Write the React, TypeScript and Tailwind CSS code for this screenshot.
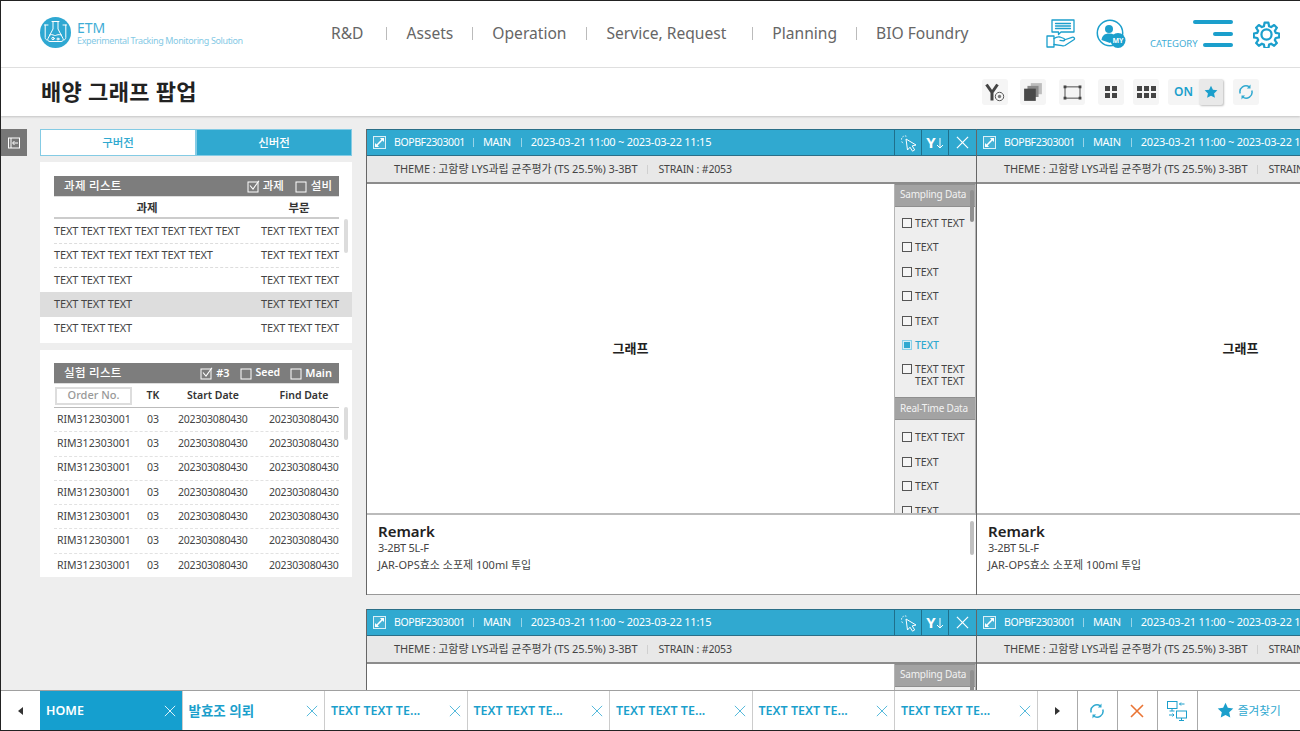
import React from "react";

const FONT = '"Noto Sans", "Noto Sans CJK KR", sans-serif';

function Logo() {
  return (
    <svg width="31" height="31" viewBox="0 0 31 31" fill="none" stroke="#fff" strokeWidth="1" strokeLinecap="round" strokeLinejoin="round">
      <circle cx="15.5" cy="15.5" r="15.5" fill="#2fa8d2" stroke="none" />
      <path d="M12 4.500h7M13 4.500v7.500l-5 9.500c-.7 1.600.2 3 2 3h11c1.800 0 2.700-1.400 2-3l-5-9.500V4.500" />
      <path d="M9.500 18c3-1.500 4.500 1 6 .5s3-1.500 6-.5" />
      <circle cx="13" cy="21.500" r="1.200" />
      <circle cx="18" cy="22" r="1" />
      <path d="M4.500 8h3.500M5.200 8v12.500c0 1.500 1 2.500 2 2.500M26.500 8H23M25.800 8v12.500c0 1.500-1 2.500-2 2.500" />
    </svg>
  );
}

function ChatHand() {
  return (
    <svg width="32" height="30" viewBox="0 0 32 30" fill="none" stroke="#1b9fcc" strokeWidth="1.300" strokeLinejoin="round" strokeLinecap="round">
      <path d="M6 1h22v12H15l-2.500 2.500V13H6z" />
      <path d="M9.500 4.500h15M9.500 7h15M9.500 9.500h15" />
      <rect x="1" y="17" width="7" height="11" />
      <path d="M8 19.500c2-1.500 4-2 6-1.500l4 1.500c1.500.6 1 2.500-.5 2.300L14 21.300M18 21l8-2.700c2-.5 3.500 1.200 1.800 2.400L19 26.500c-1 .5-2 .5-3 .2l-8-1.200" />
    </svg>
  );
}

function UserMy() {
  return (
    <svg width="31" height="30" viewBox="0 0 31 30" fill="none">
      <circle cx="14" cy="14" r="12.700" stroke="#1b9fcc" strokeWidth="1.500" />
      <circle cx="13" cy="10" r="4" fill="#1b9fcc" />
      <path d="M5.500 21c.5-4.500 3.500-6.500 7.500-6.500s6 1.500 7 4L14 24z" fill="#1b9fcc" />
      <circle cx="22" cy="21.500" r="7.500" fill="#1b9fcc" />
      <text x="22" y="24" textAnchor="middle" fontSize="7" fontWeight="700" fill="#fff" fontFamily={FONT}>MY</text>
    </svg>
  );
}

function Gear() {
  return (
    <svg width="27" height="27" viewBox="0 0 24 24" fill="none" stroke="#1b9fcc" strokeWidth="2" strokeLinejoin="round">
      <path d="M10.300 1.500h3.400l.6 3.100 1.800.8 2.700-1.800 2.400 2.400-1.800 2.700.8 1.800 3.100.6v3.400l-3.100.6-.8 1.800 1.800 2.700-2.400 2.400-2.700-1.800-1.800.8-.6 3.100h-3.400l-.6-3.100-1.800-.8-2.700 1.800-2.400-2.400 1.800-2.700-.8-1.800-3.100-.6v-3.400l3.100-.6.8-1.800-1.800-2.700 2.400-2.400 2.700 1.800 1.800-.8z" />
      <circle cx="12" cy="12" r="4.500" />
    </svg>
  );
}

function Refresh({ size = 16, color = "#30a9d0" }: { size?: number; color?: string }) {
  return (
    <svg width={size} height={size} viewBox="0 0 16 16" fill="none" stroke={color} strokeWidth="1.500">
      <path d="M2.200 9.500A6 6 0 0 1 11.500 3" />
      <path d="M13.800 6.500A6 6 0 0 1 4.500 13" />
      <path d="M12.500 .6v3.800H8.900z" fill={color} stroke="none" />
      <path d="M3.500 15.400v-3.800h3.600z" fill={color} stroke="none" />
    </svg>
  );
}

function Star({ size = 14, color = "#1b9fcc" }: { size?: number; color?: string }) {
  return (
    <svg width={size} height={size} viewBox="0 0 16 16">
      <path d="M8 .8l2.200 4.700 5.100.6-3.800 3.500 1 5.100L8 12.200l-4.500 2.500 1-5.100L.7 6.100l5.100-.6z" fill={color} />
    </svg>
  );
}

function Cross({ size = 14, color = "#fff", width = 1 }: { size?: number; color?: string; width?: number }) {
  return (
    <svg width={size} height={size} viewBox="0 0 14 14" stroke={color} strokeWidth={width} fill="none">
      <path d="M1 1l12 12M13 1L1 13" />
    </svg>
  );
}

function Box({ checked, color = "#555", className = "" }: { checked?: boolean; color?: string; className?: string }) {
  return (
    <svg width="13" height="13" viewBox="0 0 13 13" fill="none" className={className}>
      <rect x="1" y="2" width="10" height="10" stroke={color} strokeWidth="1" />
      {checked && <path d="M3 5.500l3 3.500L12 .8" stroke={color} strokeWidth="1.100" />}
    </svg>
  );
}

function ToolButton({ children }: { children: React.ReactNode }) {
  return <div className="w-[26px] h-[26px] rounded-[3px] bg-[#f5f5f5] flex items-center justify-center">{children}</div>;
}

function Header() {
  const nav: [string, string, string][] = [
    ["R&D", "", ""],
    ["Assets", "ml-[22px]", "ml-[20px]"],
    ["Operation", "ml-[19px]", "ml-[19px]"],
    ["Service, Request", "ml-[20px]", "ml-[19px]"],
    ["Planning", "ml-[26px]", "ml-[19px]"],
    ["BIO Foundry", "ml-[19px]", "ml-[19px]"],
  ];
  return (
    <header className="h-[67px] bg-white border-b border-[#e2e2e2] flex items-center shrink-0">
      <div className="ml-[39px] flex items-center w-[291px] -mt-[4px] shrink-0">
        <Logo />
        <div className="ml-[6px] flex flex-col">
          <span className="text-[14px] leading-[17px] text-[#3fadd6]">ETM</span>
          <span className="text-[9px] leading-[10px] tracking-[-0.37px] text-[#84c9e5] whitespace-nowrap">Experimental Tracking Monitoring Solution</span>
        </div>
      </div>
      <nav className="flex items-center text-[15.600px] text-[#666]">
        {nav.map(([t, sep, m], i) => (
          <React.Fragment key={t}>
            {i > 0 && <span className={`w-px h-[13px] bg-[#bbb] ${sep}`} />}
            <span className={`${m} whitespace-nowrap`}>{t}</span>
          </React.Fragment>
        ))}
      </nav>
      <div className="ml-auto flex items-center">
        <ChatHand />
        <div className="ml-[18px]"><UserMy /></div>
        <div className="ml-[23px] relative w-[83px] h-[30px]">
          <span className="absolute left-0 top-[18px] text-[9.500px] leading-[14px] text-[#3fadd6]">CATEGORY</span>
          <span className="absolute right-0 top-[1px] w-[40px] h-[4px] rounded-full bg-[#1b9fcc]" />
          <span className="absolute right-0 top-[13px] w-[20px] h-[4px] rounded-full bg-[#1b9fcc]" />
          <span className="absolute right-0 top-[24px] w-[30px] h-[4px] rounded-full bg-[#1b9fcc]" />
        </div>
        <div className="ml-[20px] mr-[20px]"><Gear /></div>
      </div>
    </header>
  );
}

function TitleBar() {
  return (
    <div className="h-[48px] bg-white flex items-center shrink-0 shadow-[0_1px_2px_rgba(0,0,0,0.18)] z-10">
      <h1 className="ml-[40px] text-[22px] font-semibold text-[#222] tracking-[0.3px] -mt-[1px]">배양 그래프 팝업</h1>
      <div className="ml-auto mr-[41px] flex items-center">
        <ToolButton>
          <svg width="22" height="22" viewBox="0 0 22 22" fill="none">
            <path d="M2.500 3.500l5.500 8v8M13.500 3.500L8 11.500" stroke="#444" strokeWidth="3" />
            <circle cx="15.500" cy="15.500" r="4.200" fill="#f5f5f5" stroke="#555" strokeWidth="1" />
            <circle cx="15.500" cy="15.500" r="1.700" fill="#777" />
          </svg>
        </ToolButton>
        <div className="ml-[12px]">
          <ToolButton>
            <svg width="20" height="20" viewBox="0 0 18 18">
              <rect x="7" y="1" width="10" height="10" fill="#bdbdbd" />
              <rect x="4" y="3.500" width="10" height="10" fill="#8a8a8a" />
              <rect x="1" y="6" width="10.500" height="11" fill="#4a4a4a" />
            </svg>
          </ToolButton>
        </div>
        <div className="ml-[13px]">
          <ToolButton>
            <svg width="19" height="15" viewBox="0 0 20 16" fill="none">
              <rect x="2" y="2" width="16" height="12" stroke="#444" strokeWidth="1" />
              <rect x="0.500" y="0.500" width="3" height="3" fill="#444" />
              <rect x="16.500" y="0.500" width="3" height="3" fill="#444" />
              <rect x="0.500" y="12.500" width="3" height="3" fill="#444" />
              <rect x="16.500" y="12.500" width="3" height="3" fill="#444" />
            </svg>
          </ToolButton>
        </div>
        <div className="ml-[13px]">
          <ToolButton>
            <div className="grid grid-cols-2 gap-[2px]">
              {[0, 1, 2, 3].map((i) => <span key={i} className="w-[5px] h-[5px] bg-[#444]" />)}
            </div>
          </ToolButton>
        </div>
        <div className="ml-[9px]">
          <ToolButton>
            <div className="grid grid-cols-3 gap-[2px]">
              {[0, 1, 2, 3, 4, 5].map((i) => <span key={i} className="w-[5px] h-[5px] bg-[#444]" />)}
            </div>
          </ToolButton>
        </div>
        <div className="ml-[9px] w-[55px] h-[26px] rounded-[3px] bg-[#f5f5f5] flex items-center">
          <span className="w-[31px] text-center text-[12px] font-semibold text-[#1b9fcc]">ON</span>
          <span className="w-[24px] h-[26px] rounded-[2px] bg-[#e9e9e9] shadow-[1px_1px_2px_rgba(0,0,0,0.25)] flex items-center justify-center">
            <Star size={14} />
          </span>
        </div>
        <div className="ml-[10px]">
          <ToolButton><Refresh size={16} /></ToolButton>
        </div>
      </div>
    </div>
  );
}

function ListBar({ title, children }: { title: string; children: React.ReactNode }) {
  return (
    <div className="ml-[14px] w-[285px] h-[21px] bg-[#7d7d7d] border-b border-[#ddd] flex items-center text-white text-[11.500px] font-medium pl-[10px] pr-[7px]">
      <span className="tracking-[0.3px]">{title}</span>
      <div className="ml-auto flex items-center">{children}</div>
    </div>
  );
}

function ProjectCard() {
  const rows = [
    "TEXT TEXT TEXT TEXT TEXT TEXT TEXT",
    "TEXT TEXT TEXT TEXT TEXT TEXT",
    "TEXT TEXT TEXT",
    "TEXT TEXT TEXT",
    "TEXT TEXT TEXT",
  ];
  return (
    <section className="relative mt-[6px] h-[181px] bg-white pt-[14px]">
      <ListBar title="과제 리스트">
        <Box checked color="#fff" />
        <span className="ml-[3px]">과제</span>
        <Box color="#fff" className="ml-[11px]" />
        <span className="ml-[3px]">설비</span>
      </ListBar>
      <div className="ml-[14px] w-[285px] h-[22.400px] border-b-2 border-[#ccc] flex items-center text-[11.500px] font-semibold text-[#333]">
        <span className="w-[186px] text-center">과제</span>
        <span className="ml-[20px] w-[78px] text-center">부문</span>
      </div>
      {rows.map((r, i) => (
        <div key={i} className={`h-[24.300px] flex items-center text-[11px] tracking-[-0.15px] text-[#444] whitespace-nowrap pl-[14px] ${i === 3 ? "bg-[#dddddd]" : ""}`}>
          <div className={`w-[285px] flex h-full items-center ${i < 4 && i !== 2 && i !== 3 ? "border-b border-dashed border-[#ddd]" : ""}`}>
            <span className="w-[207px] shrink-0">{r}</span>
            <span className="w-[78px] shrink-0">TEXT TEXT TEXT</span>
          </div>
        </div>
      ))}
      <span className="absolute left-[304px] top-[57px] w-[4px] h-[34px] rounded-full bg-[#dcdcdc]" />
    </section>
  );
}

function ExperimentCard() {
  return (
    <section className="relative mt-[7px] h-[227px] bg-white pt-[13px]">
      <ListBar title="실험 리스트">
        <Box checked color="#fff" />
        <span className="ml-[3px] font-semibold text-[11px]">#3</span>
        <Box color="#fff" className="ml-[10px]" />
        <span className="ml-[3px] font-semibold text-[10.500px]">Seed</span>
        <Box color="#fff" className="ml-[10px]" />
        <span className="ml-[2px] font-semibold text-[11px]">Main</span>
      </ListBar>
      <div className="ml-[14px] w-[285px] h-[24px] border-b border-[#bbb] flex items-center text-[10.500px] font-semibold text-[#333] whitespace-nowrap">
        <span className="ml-[1px] w-[77px] h-[18px] border-2 border-[#ddd] flex items-center justify-center text-[11px] font-medium text-[#999] shrink-0">Order No.</span>
        <span className="ml-[11px] w-[20px] text-center shrink-0">TK</span>
        <span className="ml-[15px] w-[70px] text-center shrink-0">Start Date</span>
        <span className="ml-[21px] w-[70px] text-center shrink-0">Find Date</span>
      </div>
      {[0, 1, 2, 3, 4, 5, 6].map((i) => (
        <div key={i} className={`ml-[14px] w-[285px] h-[24.300px] flex items-center text-[10.500px] text-[#444] whitespace-nowrap ${i < 6 ? "border-b border-dashed border-[#e2e2e2]" : ""}`}>
          <span className="ml-[3px] w-[90px] shrink-0">RIM312303001</span>
          <span className="w-[31px] shrink-0">03</span>
          <span className="w-[91px] shrink-0 tracking-[-0.2px]">202303080430</span>
          <span className="shrink-0 tracking-[-0.2px]">202303080430</span>
        </div>
      ))}
      <span className="absolute left-[304px] top-[57px] w-[4px] h-[33px] rounded-full bg-[#dcdcdc]" />
    </section>
  );
}

function SideItem({ label, active }: { label: string; active?: boolean }) {
  return (
    <div className={`flex items-start pl-[7px] text-[10.500px] tracking-[-0.05px] leading-[12px] ${active ? "text-[#30a9d0] font-medium" : "text-[#444]"}`}>
      {active ? (
        <span className="mt-[1px] w-[10px] h-[10px] border border-[#8ad0e8] bg-[#d5eef6] flex items-center justify-center shrink-0">
          <span className="w-[6px] h-[6px] bg-[#30a9d0]" />
        </span>
      ) : (
        <span className="mt-[1px] w-[10px] h-[10px] border border-[#555] bg-white/40 shrink-0" />
      )}
      <span className="ml-[3px] w-[54px]">{label}</span>
    </div>
  );
}

function SideHead({ label, className = "" }: { label: string; className?: string }) {
  return (
    <div className={`h-[23px] bg-[#a3a3a3] border-y border-[#8f8f8f] flex items-center pl-[5px] text-[10px] tracking-[-0.2px] text-[#f2f2f2] whitespace-nowrap shrink-0 ${className}`}>
      {label}
    </div>
  );
}

function Panel() {
  return (
    <article className="w-[610px] shrink-0 flex flex-col h-[466px] border-l border-[#666]">
      <div className="h-[27px] bg-[#30a9d0] border-y border-[#2b6f88] flex items-center text-white text-[11px] whitespace-nowrap shrink-0">
        <span className="ml-[6px] w-[13px] h-[13px] border border-white/80 bg-white/10 flex items-center justify-center">
          <svg width="9" height="9" viewBox="0 0 10 10" fill="#fff">
            <path d="M5.500 0H10v4.500L8.300 2.900 2.900 8.300 4.500 10H0V5.500l1.700 1.600 5.400-5.400z" />
          </svg>
        </span>
        <span className="ml-[8px] text-[10.500px] tracking-[-0.4px]">BOPBF2303001</span>
        <span className="ml-[8px] w-px h-[9px] bg-white/50" />
        <span className="ml-[9px] tracking-[-0.3px]">MAIN</span>
        <span className="ml-[10px] w-px h-[9px] bg-white/50" />
        <span className="ml-[9px] tracking-[-0.24px]">2023-03-21 11:00 ~ 2023-03-22 11:15</span>
        <div className="ml-auto flex h-full">
          <span className="w-[27px] border-l border-[#1f6f8b] flex items-center justify-center">
            <svg width="20" height="20" viewBox="0 0 20 20" fill="none" stroke="#fff" strokeWidth="1">
              <path d="M8 6l1.500 11 2.500-2.800 2.500 4 2.200-1.300-2.500-4 3.800-.9z" strokeLinejoin="round" />
              <path d="M3.500 6.500a3.500 3.500 0 0 1 6-2.500M3.800 8.500c.4 1 .9 1.700 1.700 2.300" strokeDasharray="1.400 1.300" />
            </svg>
          </span>
          <span className="w-[27px] border-l border-[#1f6f8b] flex items-center justify-center text-[15px] font-bold leading-none">
            Y<svg width="8" height="11" viewBox="0 0 8 11" fill="none" stroke="#fff" strokeWidth="1" className="mt-[2px]"><path d="M4 0v10M1 7l3 3 3-3" /></svg>
          </span>
          <span className="w-[28px] border-l border-[#1f6f8b] flex items-center justify-center">
            <Cross size={13} width={1.300} />
          </span>
        </div>
      </div>
      <div className="h-[28px] bg-[#e8e8e8] border-b-2 border-[#8c8c8c] pt-[1px] flex items-center text-[11px] text-[#444] whitespace-nowrap shrink-0">
        <span className="ml-[27px] tracking-[-0.1px]">THEME : 고함량 LYS과립 균주평가 (TS 25.5%) 3-3BT</span>
        <span className="ml-[10px] w-px h-[9px] bg-[#d0d0d0]" />
        <span className="ml-[10px] text-[10.500px] tracking-[-0.15px]">STRAIN : #2053</span>
      </div>
      <div className="flex h-[331px] bg-white shrink-0 border-b-2 border-[#bbb]">
        <div className="flex-1 flex items-center justify-center text-[13px] font-semibold text-[#222]">그래프</div>
        <div className="relative w-[82px] shrink-0 bg-[#eeeeee] border-x border-[#b5b5b5] overflow-hidden">
          <SideHead label="Sampling Data" className="pb-[2px]" />
          <div className="flex flex-col gap-[12.400px] pt-[10px]">
            <SideItem label="TEXT TEXT" />
            <SideItem label="TEXT" />
            <SideItem label="TEXT" />
            <SideItem label="TEXT" />
            <SideItem label="TEXT" />
            <SideItem label="TEXT" active />
            <SideItem label="TEXT TEXT TEXT TEXT" />
          </div>
          <div className="mt-[10px]"><SideHead label="Real-Time Data" /></div>
          <div className="flex flex-col gap-[12.400px] pt-[11px]">
            <SideItem label="TEXT TEXT" />
            <SideItem label="TEXT" />
            <SideItem label="TEXT" />
            <SideItem label="TEXT" />
          </div>
          <span className="absolute right-[1px] top-[6px] w-[4px] h-[32px] rounded-full bg-[#8f8f8f]" />
        </div>
      </div>
      <div className="relative flex-1 bg-white border-b border-[#999] pl-[11px] pt-[6px] overflow-hidden">
        <div className="text-[15px] leading-[20px] font-semibold text-[#222]">Remark</div>
        <div className="-mt-[1px] text-[11px] leading-[16px] tracking-[-0.3px] text-[#444]">3-2BT 5L-F</div>
        <div className="text-[11px] leading-[17px] text-[#444]">JAR-OPS효소 소포제 100ml 투입</div>
        <span className="absolute right-[2px] top-[6px] w-[4px] h-[34px] rounded-full bg-[#c0c0c0]" />
      </div>
    </article>
  );
}

function Sidebar() {
  return (
    <aside className="ml-[13px] w-[312px] shrink-0 pt-[13px]">
      <div className="h-[27px] flex text-[11.500px] font-medium">
        <div className="w-[156px] bg-white border border-[#84cbe4] text-[#30a9d0] flex items-center justify-center">구버전</div>
        <div className="flex-1 bg-[#30a9d0] border border-[#84cbe4] text-white flex items-center justify-center">신버전</div>
      </div>
      <ProjectCard />
      <ExperimentCard />
    </aside>
  );
}

function TabCell({ label, active, large }: { label: string; active?: boolean; large?: boolean }) {
  return (
    <div className={`w-[142.500px] shrink-0 h-full flex items-center border-r border-[#ccc] pl-[6px] pr-[6px] ${active ? "bg-[#159fcf] text-white" : "text-[#1b9fcc]"}`}>
      <span className={`${large ? "text-[13.500px]" : "text-[12.500px]"} mt-[1px] font-semibold whitespace-nowrap`}>{label}</span>
      <span className="ml-auto"><Cross size={12} color={active ? "#fff" : "#3aaed6"} /></span>
    </div>
  );
}

function IconCell({ children }: { children: React.ReactNode }) {
  return <div className="w-[40px] shrink-0 h-full flex items-center justify-center border-r border-[#aaa]">{children}</div>;
}

function Footer() {
  return (
    <footer className="h-[40px] bg-white border-t border-[#a0a0a0] flex items-center shrink-0 z-10">
      <div className="w-[39px] shrink-0 h-full flex items-center justify-center">
        <span className="w-0 h-0 border-y-[4px] border-y-transparent border-r-[5px] border-r-[#333]" />
      </div>
      <TabCell label="HOME" active />
      <TabCell label="발효조 의뢰" large />
      <TabCell label="TEXT TEXT TE..." />
      <TabCell label="TEXT TEXT TE..." />
      <TabCell label="TEXT TEXT TE..." />
      <TabCell label="TEXT TEXT TE..." />
      <TabCell label="TEXT TEXT TE..." />
      <IconCell>
        <span className="w-0 h-0 border-y-[4px] border-y-transparent border-l-[5px] border-l-[#333]" />
      </IconCell>
      <IconCell><Refresh size={16} /></IconCell>
      <IconCell><Cross size={14} color="#ea7434" width={1.600} /></IconCell>
      <IconCell>
        <svg width="20" height="20" viewBox="0 0 20 20" fill="none" stroke="#1b9fcc" strokeWidth="1">
          <rect x="0.500" y="0.500" width="9.500" height="7" />
          <path d="M5 7.500v2.500M2.500 10h5" />
          <rect x="9.500" y="10" width="10" height="7" />
          <path d="M14.500 17v2.500M12 19.500h5" />
          <path d="M12.500 3h5M14 1.500L12.500 3 14 4.500M2 14h5M5.500 12.500L7 14l-1.500 1.500" />
        </svg>
      </IconCell>
      <div className="flex-1 h-full flex items-center justify-center">
        <Star size={17} />
        <span className="ml-[4px] text-[11.700px] text-[#30a9d0]">즐겨찾기</span>
      </div>
    </footer>
  );
}

export default function App() {
  return (
    <div className="w-[1300px] h-[731px] bg-[#eeeeee] border-y border-l border-[#222] flex flex-col overflow-hidden" style={{ fontFamily: FONT }}>
      <Header />
      <TitleBar />
      <main className="flex-1 min-h-0 flex overflow-hidden relative">
        <div className="w-[26px] shrink-0 pt-[13px]">
          <div className="w-[26px] h-[27px] bg-[#777] flex items-center justify-center">
            <svg width="12" height="12" viewBox="0 0 12 12" fill="none" stroke="#fff" strokeWidth="1">
              <rect x="0.500" y="1" width="11" height="10" />
              <path d="M3 1v10M10 6H5M6.500 4L4.500 6l2 2" />
            </svg>
          </div>
        </div>
        <Sidebar />
        <div className="ml-[14px] pt-[13px] flex flex-col gap-[14px] shrink-0">
          <div className="flex"><Panel /><Panel /></div>
          <div className="flex"><Panel /><Panel /></div>
        </div>
      </main>
      <Footer />
    </div>
  );
}
